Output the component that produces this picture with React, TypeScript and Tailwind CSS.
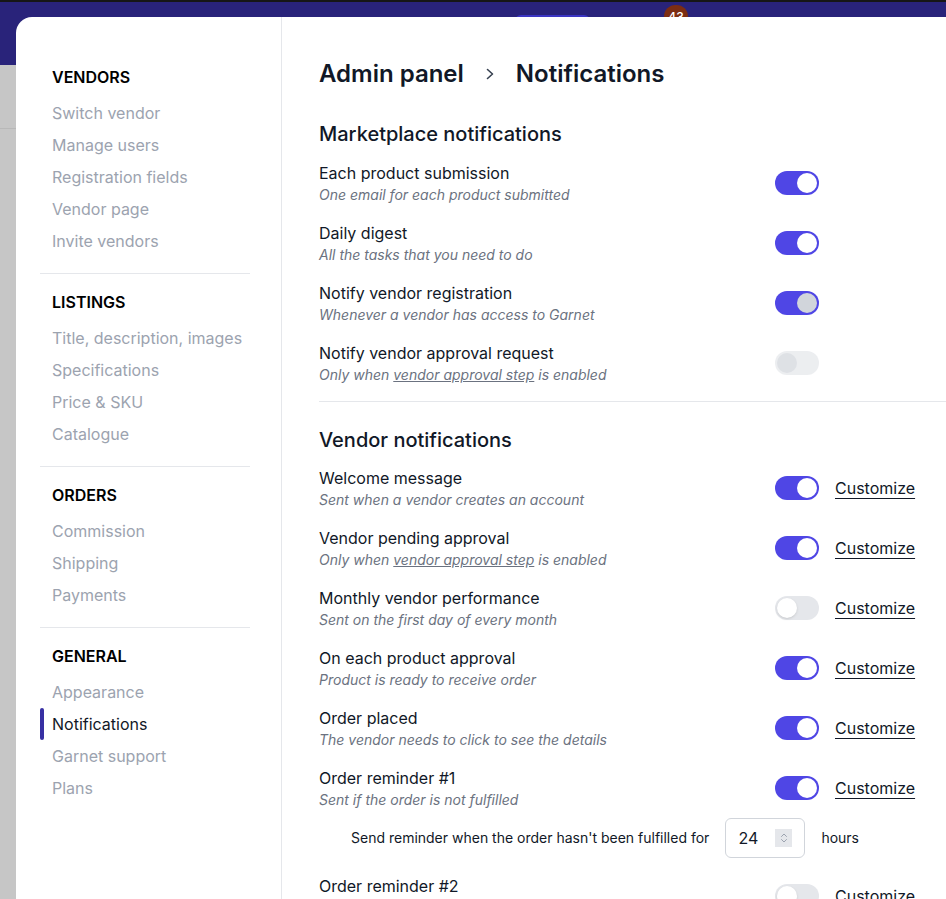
import React from "react";

type NavGroup = { title: string; items: string[] };

const NAV: NavGroup[] = [
  { title: "VENDORS", items: ["Switch vendor", "Manage users", "Registration fields", "Vendor page", "Invite vendors"] },
  { title: "LISTINGS", items: ["Title, description, images", "Specifications", "Price & SKU", "Catalogue"] },
  { title: "ORDERS", items: ["Commission", "Shipping", "Payments"] },
  { title: "GENERAL", items: ["Appearance", "Notifications", "Garnet support", "Plans"] },
];

type ToggleState = "on" | "on-disabled" | "off" | "off-disabled";

type Row = {
  title: string;
  sub: React.ReactNode;
  state: ToggleState;
  customize?: boolean;
};

const approvalStep = (
  <>
    Only when <span className="underline">vendor approval step</span> is enabled
  </>
);

const MARKETPLACE: Row[] = [
  { title: "Each product submission", sub: "One email for each product submitted", state: "on" },
  { title: "Daily digest", sub: "All the tasks that you need to do", state: "on" },
  { title: "Notify vendor registration", sub: "Whenever a vendor has access to Garnet", state: "on-disabled" },
  { title: "Notify vendor approval request", sub: approvalStep, state: "off-disabled" },
];

const VENDOR: Row[] = [
  { title: "Welcome message", sub: "Sent when a vendor creates an account", state: "on", customize: true },
  { title: "Vendor pending approval", sub: approvalStep, state: "on", customize: true },
  { title: "Monthly vendor performance", sub: "Sent on the first day of every month", state: "off", customize: true },
  { title: "On each product approval", sub: "Product is ready to receive order", state: "on", customize: true },
  { title: "Order placed", sub: "The vendor needs to click to see the details", state: "on", customize: true },
  { title: "Order reminder #1", sub: "Sent if the order is not fulfilled", state: "on", customize: true },
];

const Toggle = ({ state }: { state: ToggleState }) => {
  const on = state === "on" || state === "on-disabled";
  const track = on ? "bg-[#4f46e5]" : "bg-[#e5e7eb]";
  const knob =
    state === "on"
      ? "bg-white translate-x-5"
      : state === "on-disabled"
      ? "bg-[#d1d5db] translate-x-5"
      : state === "off"
      ? "bg-white shadow-sm"
      : "bg-[#d1d5db]";
  return (
    <div className={`relative h-6 w-11 shrink-0 rounded-full ${track} ${state === "off-disabled" ? "opacity-70" : ""}`}>
      <span className={`absolute left-0.5 top-0.5 h-5 w-5 rounded-full ${knob}`} />
    </div>
  );
};

const SettingRow = ({ row }: { row: Row }) => (
  <div className="flex w-[596px] items-center">
    <div className="flex-1">
      <div className="text-base leading-6 text-[#111827]">{row.title}</div>
      <div className="text-sm italic leading-5 text-[#6b7280]">{row.sub}</div>
    </div>
    <Toggle state={row.state} />
    <div className="ml-4 w-20">
      {row.customize && <span className="text-base leading-6 text-[#111827] underline underline-offset-4">Customize</span>}
    </div>
  </div>
);

export default function App() {
  return (
    <div
      className="relative h-[899px] w-[946px] overflow-hidden bg-[#c6c6c6]"
      style={{ fontFamily: "Inter, 'Noto Sans', sans-serif" }}
    >
      {/* page behind the sheet */}
      <div className="relative h-[65px] border-t-2 border-[#161616] bg-[#29237a]">
        <div className="absolute left-[515px] top-[13px] h-8 w-[75px] rounded-md bg-[#3b35c3]" />
        <div className="absolute left-[664px] top-[3px] flex h-[23px] w-[24px] items-center justify-center rounded-full bg-[#7c2d12] text-[12px] font-medium text-white">
          43
        </div>
      </div>
      <div className="h-[64px] border-b border-[#b8b8b8] bg-[#c6c6c6]" />

      {/* settings sheet */}
      <div className="absolute bottom-0 left-4 right-0 top-[17px] flex rounded-tl-2xl bg-white">
        <aside className="w-[266px] shrink-0 border-r border-[#e5e7eb] pl-6 pt-12">
          {NAV.map((g, gi) => (
            <div key={g.title}>
              {gi > 0 && <div className="my-4 h-px w-[210px] bg-[#e5e7eb]" />}
              <div className="mb-2 pl-3 text-base font-semibold leading-6 text-black">{g.title}</div>
              {g.items.map((item) => {
                const active = item === "Notifications";
                return (
                  <div key={item} className="relative flex h-8 items-center pl-3">
                    {active && <span className="absolute left-0 top-0 h-8 w-1 rounded-sm bg-[#3730a3]" />}
                    <span className={`text-base ${active ? "text-[#111827]" : "text-[#9ca3af]"}`}>{item}</span>
                  </div>
                );
              })}
            </div>
          ))}
        </aside>

        <main className="flex-1 pl-[37px] pt-[41px]">
          <div className="flex items-center gap-5 text-2xl font-semibold leading-8 text-[#111827]">
            <span>Admin panel</span>
            <svg width="12" height="14" viewBox="0 0 12 14" fill="none" stroke="#374151" strokeWidth="1.6" strokeLinecap="round" strokeLinejoin="round">
              <path d="M3.5 2.5l5 4.5-5 4.5" />
            </svg>
            <span>Notifications</span>
          </div>

          <h2 className="mt-[30px] text-xl font-medium leading-7 text-[#111827]">Marketplace notifications</h2>
          <div className="mt-[13px] flex flex-col gap-4">
            {MARKETPLACE.map((r) => (
              <SettingRow key={r.title} row={r} />
            ))}
          </div>

          <div className="mt-4 h-px bg-[#e5e7eb]" />

          <h2 className="mt-6 text-xl font-medium leading-7 text-[#111827]">Vendor notifications</h2>
          <div className="mt-3 flex flex-col gap-4">
            {VENDOR.map((r) => (
              <SettingRow key={r.title} row={r} />
            ))}
          </div>

          <div className="mt-2 flex items-center pl-8 text-sm text-[#111827]">
            <span>Send reminder when the order hasn't been fulfilled for</span>
            <div className="ml-4 flex h-10 w-20 items-center justify-between rounded-md border border-[#d1d5db] pl-3 pr-3">
              <span className="text-base">24</span>
              <div className="flex h-[18px] w-[17px] flex-col items-center justify-center bg-[#e5e7eb]">
                <svg width="8" height="12" viewBox="0 0 8 12" fill="none" stroke="#9ca3af" strokeWidth="1" strokeLinecap="round" strokeLinejoin="round">
                  <path d="M1.5 4.5L4 2l2.5 2.5M1.5 7.5L4 10l2.5-2.5" />
                </svg>
              </div>
            </div>
            <span className="ml-4">hours</span>
          </div>

          <div className="mt-4">
            <SettingRow row={{ title: "Order reminder #2", sub: "Sent if the order is still not fulfilled", state: "off", customize: true }} />
          </div>
        </main>
      </div>
    </div>
  );
}
